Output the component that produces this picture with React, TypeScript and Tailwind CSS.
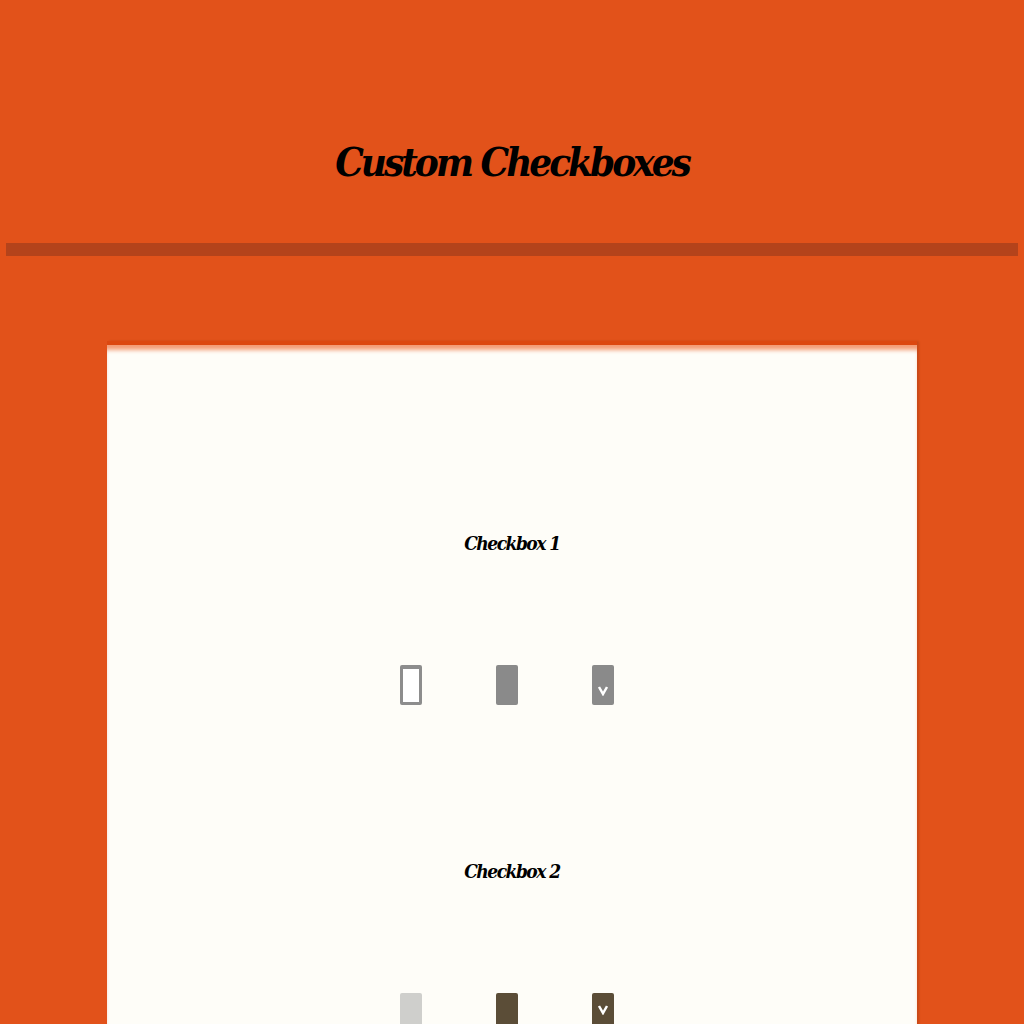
import React from "react";

type BoxState = "empty" | "filled" | "checked";

const serif = { fontFamily: '"DejaVu Serif Condensed", "DejaVu Serif", "Liberation Serif", serif' };

function Box({ state, tone }: { state: BoxState; tone: "gray" | "brown" }) {
  if (tone === "gray") {
    if (state === "empty")
      return <span className="block w-[22px] h-[40px] rounded-[2px] border-[3px] border-t-4 border-[#8d8d8d] bg-white" />;
    if (state === "filled")
      return <span className="block w-[22px] h-[40px] rounded-[2px] bg-[#8a8a8a]" />;
    return (
      <span className="flex w-[22px] h-[40px] items-end justify-center pb-[9px] rounded-[2px] bg-[#8a8a8a]">
        <svg width="12" height="12" viewBox="0 0 12 12">
          <path d="M2 3 L6 10 L10 3" fill="none" stroke="#fff" strokeWidth="2.5" />
        </svg>
      </span>
    );
  }
  if (state === "empty")
    return <span className="block w-[22px] h-[40px] rounded-[2px] bg-[#cfcfcc]" />;
  if (state === "filled")
    return <span className="block w-[22px] h-[40px] rounded-[2px] bg-[#5b4d37]" />;
  return (
    <span className="flex w-[22px] h-[40px] items-start justify-center pt-[10px] rounded-[2px] bg-[#5b4d37]">
      <svg width="12" height="12" viewBox="0 0 12 12">
        <path d="M2 3 L6 10 L10 3" fill="none" stroke="#fff" strokeWidth="2.5" />
      </svg>
    </span>
  );
}

function Group({ title, tone }: { title: string; tone: "gray" | "brown" }) {
  return (
    <section className="flex flex-col items-center">
      <h2 className="text-[19px] leading-[30px] font-bold italic text-black tracking-[-1.5px]" style={serif}>
        {title}
      </h2>
      <div className="mt-[107px] mr-[10px] flex gap-[74px]">
        <Box state="empty" tone={tone} />
        <Box state="filled" tone={tone} />
        <Box state="checked" tone={tone} />
      </div>
    </section>
  );
}

export default function App() {
  return (
    <div className="h-[1024px] overflow-hidden bg-[#e2521a]">
      <header className="h-[243px] pt-[132px]">
        <h1
          className="text-center text-[40px] leading-[60px] font-bold italic text-black tracking-[-3px]"
          style={serif}
        >
          Custom Checkboxes
        </h1>
      </header>
      <div className="mx-[6px] h-[13px] bg-[#b4431b]" />
      <main className="mx-auto mt-[85px] w-[810px] min-h-[700px] border-t-4 border-[#dc4810] bg-[#fefdf8] shadow-[inset_0_7px_4px_-2px_#f39c76,2px_0_2px_rgba(0,0,0,0.12)] pt-[183px]">
        <div className="flex flex-col gap-[151px]">
          <Group title="Checkbox 1" tone="gray" />
          <Group title="Checkbox 2" tone="brown" />
        </div>
      </main>
    </div>
  );
}
